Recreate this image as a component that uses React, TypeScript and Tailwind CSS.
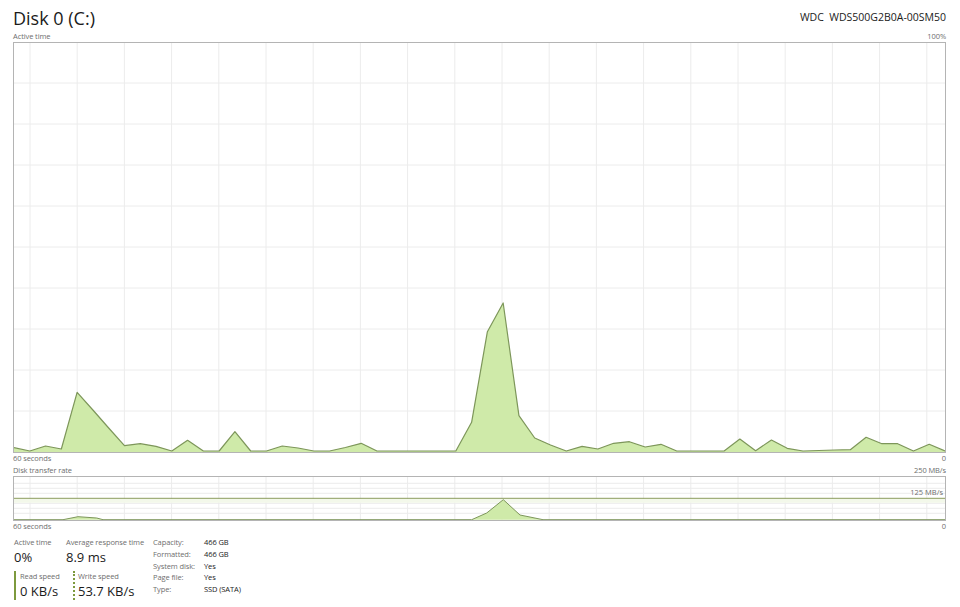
import React from "react";

// active time samples, screen y of each point (chart top = 43, baseline = 452)
const activeY = [
  448.7, 452, 447, 450, 393.3, 411, 429, 446.7, 444.7, 447.3,
  452, 441.3, 452, 452, 432.7, 452, 452, 447, 449, 452,
  452, 448.5, 444.3, 452, 452, 452, 452, 452, 452, 423.3,
  332.7, 304, 416.7, 439, 446, 452, 447.3, 450, 444.3, 442.7,
  448, 445.3, 452, 452, 452, 452, 440, 451.7, 441, 449.3,
  452, 451.5, 451, 450.7, 438.3, 444.7, 444.7, 452, 445.3, 452,
];

const W = 931;
const vLines = Array.from({ length: 20 }, (_, i) => 16 + i * 47.2);

function ActiveChart() {
  const H = 409;
  const pts = activeY.map((y, i) => [(i * W) / 59, y - 44] as const);
  const line = pts.map(([x, y]) => `${x},${y}`).join(" ");
  const area = `0,${H} ${line} ${W},${H}`;
  return (
    <div className="h-[411px] border border-[#b4b4b4]">
      <svg width="100%" height={H} viewBox={`0 0 ${W} ${H}`} preserveAspectRatio="none" className="block">
        {vLines.map((x) => (
          <line key={x} x1={x} x2={x} y1={0} y2={H} stroke="#ececec" strokeWidth={1} />
        ))}
        {Array.from({ length: 9 }, (_, i) => (i + 1) * 41 - 1).map((y) => (
          <line key={y} x1={0} x2={W} y1={y} y2={y} stroke="#ececec" strokeWidth={1} />
        ))}
        <polygon points={area} fill="#cfeaa9" />
        <polyline points={line} fill="none" stroke="#7d965a" strokeWidth={1.2} strokeLinejoin="round" />
      </svg>
    </div>
  );
}

function TransferChart() {
  const H = 43;
  const read = "0,42.7 49,42.7 64,39.7 82.7,41 89,42.7 457.7,42.7 472.7,36 489.3,22.7 506,38 529,42.7 931,42.7";
  return (
    <div className="h-[45px] border border-[#b4b4b4]">
      <svg width="100%" height={H} viewBox={`0 0 ${W} ${H}`} preserveAspectRatio="none" className="block">
        {vLines.map((x) => (
          <line key={x} x1={x} x2={x} y1={0} y2={H} stroke="#ececec" strokeWidth={1} />
        ))}
        {[6.3, 11.3, 16.3, 26.3, 31.3, 36.3].map((y) => (
          <line key={y} x1={0} x2={W} y1={y} y2={y} stroke="#ececec" strokeWidth={1} />
        ))}
        <rect x={0} y={21.8} width={W} height={4} fill="#f3f8ea" />
        <polygon points={read} fill="#cfeaa9" />
        <polyline points={read} fill="none" stroke="#7d965a" strokeWidth={1} />
        <line x1={0} x2={W} y1={21.3} y2={21.3} stroke="#8a9c5c" strokeWidth={1} />
      </svg>
    </div>
  );
}

function Label({ left, right }: { left: string; right: string }) {
  return (
    <div className="flex justify-between text-[7.5px] leading-[11px] tracking-[-0.1px] text-[#6e6e6e]">
      <span>{left}</span>
      <span>{right}</span>
    </div>
  );
}

const props = [
  ["Capacity:", "466 GB"],
  ["Formatted:", "466 GB"],
  ["System disk:", "Yes"],
  ["Page file:", "Yes"],
  ["Type:", "SSD (SATA)"],
];

export default function App() {
  return (
    <div className="w-[960px] h-[607px] bg-white pl-[13px] pr-[14px] font-['Segoe_UI','Open_Sans',sans-serif] text-[#1b1b1b] overflow-hidden">
      {/* Header */}
      <div className="flex justify-between items-end h-[31px]">
        <h1 className="text-[18px] leading-[26px]">Disk 0 (C:)</h1>
        <span className="text-[10.5px] leading-[14px] mb-[7px]">WDC&nbsp;&nbsp;WDS500G2B0A-00SM50</span>
      </div>

      <Label left="Active time" right="100%" />
      <ActiveChart />
      <Label left="60 seconds" right="0" />

      <div className="mt-[1px]">
        <Label left="Disk transfer rate" right="250 MB/s" />
      </div>
      <div className="relative">
        <TransferChart />
        <span className="absolute right-[3px] top-[11px] text-[7.5px] leading-[10px] text-[#6e6e6e]">125 MB/s</span>
      </div>
      <Label left="60 seconds" right="0" />

      {/* Stats */}
      <div className="flex mt-[5px] ml-[1px] text-[7.5px] tracking-[-0.1px]">
        <div className="w-[139px]">
          <div className="flex">
            <div className="w-[52px]">
              <div className="leading-[11px] text-[#6e6e6e]">Active time</div>
              <div className="text-[13px] leading-[18px] tracking-normal">0%</div>
            </div>
            <div>
              <div className="leading-[11px] text-[#6e6e6e]">Average response time</div>
              <div className="text-[13px] leading-[18px] tracking-normal">8.9 ms</div>
            </div>
          </div>
          <div className="flex mt-[5px]">
            <div className="w-[59px] border-l-2 border-[#7d9a3e] pl-[4px]">
              <div className="leading-[11px] text-[#6e6e6e]">Read speed</div>
              <div className="text-[13px] leading-[18px] tracking-normal">0 KB/s</div>
            </div>
            <div className="border-l-2 border-dotted border-[#7d9a3e] pl-[3px]">
              <div className="leading-[11px] text-[#6e6e6e]">Write speed</div>
              <div className="text-[13px] leading-[18px] tracking-normal">53.7 KB/s</div>
            </div>
          </div>
        </div>
        <div className="grid grid-cols-[51px_auto] auto-rows-[11.75px] leading-[11.75px]">
          {props.map(([k, v]) => (
            <React.Fragment key={k}>
              <span className="text-[#6e6e6e]">{k}</span>
              <span>{v}</span>
            </React.Fragment>
          ))}
        </div>
      </div>
    </div>
  );
}
